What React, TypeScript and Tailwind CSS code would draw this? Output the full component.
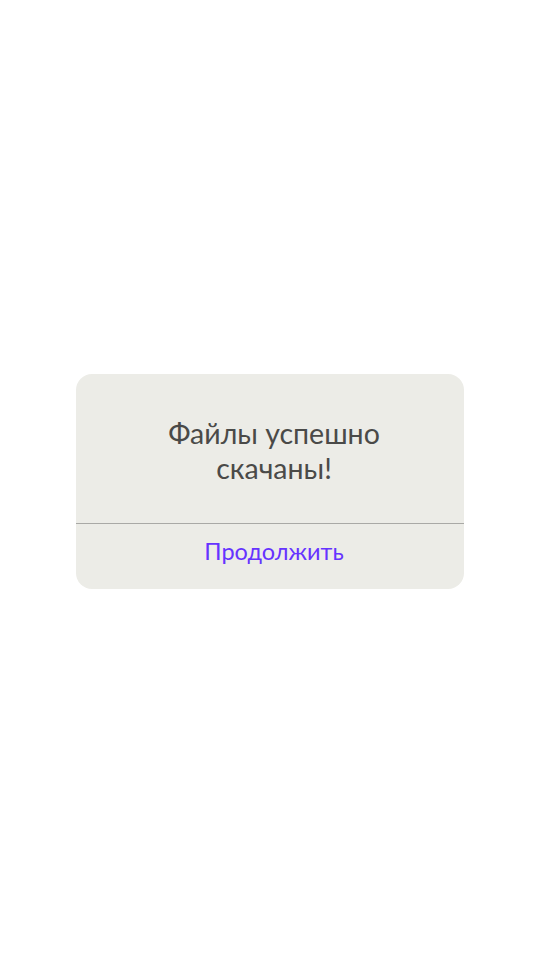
import React from 'react';

const App: React.FC = () => {
  return (
    <div className="w-[540px] h-[960px] bg-white flex items-center justify-center" style={{ fontFamily: 'Lato, "Open Sans", sans-serif' }}>
      <div className="w-[388px] h-[215px] mt-[2px] bg-[#ecece7] rounded-[16px] flex flex-col overflow-hidden">
        <div className="h-[149px] flex items-center justify-center pl-[32px] pr-6 pt-[6px]">
          <p className="text-center text-[28.5px] leading-[35px] text-[#4a4a48]">
            Файлы успешно
            <br />
            скачаны!
          </p>
        </div>
        <div className="h-px bg-[#a9a9a6]" />
        <button className="flex-1 flex items-center justify-center text-[23.5px] text-[#6633ff] pb-2 pl-2">
          Продолжить
        </button>
      </div>
    </div>
  );
};

export default App;
